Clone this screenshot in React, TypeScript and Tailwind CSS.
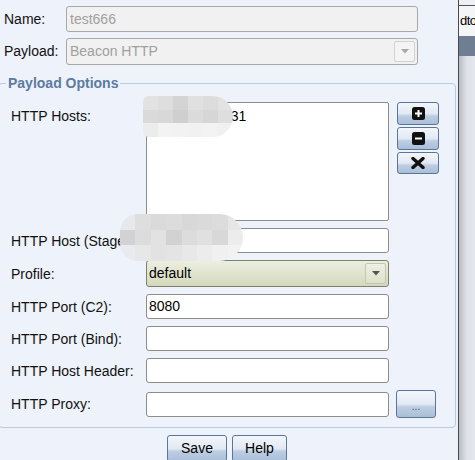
import type { ReactNode } from 'react'

const font = "font-['Liberation_Sans',Arial,sans-serif]"

const btnBg =
  'bg-[linear-gradient(to_bottom,#f3f6fb_0%,#e2e9f3_50%,#bccde2_62%,#aabfd8_100%)]'

function Arrow({ color }: { color: string }) {
  return (
    <svg width="8" height="5" viewBox="0 0 8 5">
      <path d="M0 0 H8 L4 4.5 Z" fill={color} />
    </svg>
  )
}

function TextBox({ value, className = '' }: { value?: string; className?: string }) {
  return (
    <div
      className={`w-[243px] h-[25px] border border-[#8c8c8c] rounded-[3px] bg-white flex items-center pl-[2px] text-[14px] text-black ${className}`}
    >
      {value}
    </div>
  )
}

function Row({ label, children, h = 'h-[25px]' }: { label: string; children: ReactNode; h?: string }) {
  return (
    <div className={`flex items-center ${h}`}>
      <div className="w-[135px] shrink-0 text-[14px] leading-[16px] text-[#111] whitespace-nowrap">{label}</div>
      {children}
    </div>
  )
}

function SideButton({ children, h = 'h-[23px]' }: { children: ReactNode; h?: string }) {
  return (
    <div
      className={`w-[42px] ${h} border border-[#5a7598] rounded-[3px] ${btnBg} flex items-center justify-center`}
    >
      {children}
    </div>
  )
}

function Mosaic({ cells, className }: { cells: string[][]; className: string }) {
  return (
    <div className={`absolute overflow-hidden flex flex-col ${className}`}>
      {cells.map((row, i) => (
        <div key={i} className="flex flex-1">
          {row.map((c, j) => (
            <div key={j} className="flex-1" style={{ background: c }} />
          ))}
        </div>
      ))}
    </div>
  )
}

export default function App() {
  return (
    <div className={`relative w-[475px] h-[460px] overflow-hidden flex bg-[#eef2fa] ${font}`}>
      {/* dialog */}
      <div className="w-[458px] shrink-0 flex flex-col pt-[6px]">
        <div className="flex items-center h-[26px]">
          <div className="w-[66px] pl-[4px] text-[14px] text-[#111]">Name:</div>
          <div className="w-[352px] h-[26px] border border-[#a8a8a8] rounded-[3px] bg-[#f1f1f1] flex items-center pl-[3px] text-[14px] text-[#a0a0a0]">
            test666
          </div>
        </div>
        <div className="flex items-center h-[27px] mt-[6px]">
          <div className="w-[66px] pl-[4px] text-[14px] text-[#111]">Payload:</div>
          <div className="w-[352px] h-[27px] border border-[#a8a8a8] rounded-[3px] bg-[#f1f1f1] flex items-center justify-between pl-[3px] pr-[2px] text-[14px] text-[#a0a0a0]">
            <span>Beacon HTTP</span>
            <div className="w-[21px] h-[21px] border border-[#d2d2d2] rounded-[2px] bg-[#f4f4f4] flex items-center justify-center">
              <Arrow color="#a8a8a8" />
            </div>
          </div>
        </div>

        <fieldset className="mt-[10px] ml-[-2px] w-[458px] border border-[#bccbdd] rounded-[4px] pt-[11px] pb-[9px] pl-[12px]">
          <legend className="ml-[-5px] px-[2px] text-[14px] leading-[16px] font-bold text-[#5b7ba2]">
            Payload Options
          </legend>

          <div className="flex items-start">
            <div className="w-[135px] shrink-0 pt-[6px] text-[14px] leading-[16px] text-[#111]">HTTP Hosts:</div>
            <div className="w-[243px] h-[119px] border border-[#8c8c8c] rounded-[2px] bg-white pt-[5px] pl-[2px] text-[14px] leading-[16px] text-black">
              192.168.10.131
            </div>
            <div className="ml-[8px] flex flex-col gap-[2px]">
              <SideButton>
                <svg width="13" height="13" viewBox="0 0 13 13">
                  <rect width="13" height="13" rx="2.5" fill="#111" />
                  <rect x="3" y="5.5" width="7" height="2" fill="#fff" />
                  <rect x="5.5" y="3" width="2" height="7" fill="#fff" />
                </svg>
              </SideButton>
              <SideButton>
                <svg width="13" height="13" viewBox="0 0 13 13">
                  <rect width="13" height="13" rx="2.5" fill="#111" />
                  <rect x="3" y="5.5" width="7" height="2" fill="#fff" />
                </svg>
              </SideButton>
              <SideButton h="h-[22px]">
                <svg width="14" height="12" viewBox="0 0 14 12">
                  <path d="M2 1.5 L12 10.5 M12 1.5 L2 10.5" stroke="#111" strokeWidth="3.4" strokeLinecap="round" />
                </svg>
              </SideButton>
            </div>
          </div>

          <div className="mt-[7px] flex flex-col gap-[7px]">
            <Row label="HTTP Host (Stager):">
              <TextBox />
            </Row>
            <Row label="Profile:" h="h-[27px]">
              <div className="w-[243px] h-[27px] border border-[#7d816b] rounded-[3px] bg-[linear-gradient(to_bottom,#eceee0,#d4d9bd)] flex items-center justify-between pl-[2px] pr-[2px] text-[14px] text-black">
                <span>default</span>
                <div className="w-[21px] h-[21px] border border-[#c4c8b0] rounded-[2px] bg-[linear-gradient(to_bottom,#eef0e4,#dde1c9)] flex items-center justify-center">
                  <Arrow color="#555" />
                </div>
              </div>
            </Row>
            <Row label="HTTP Port (C2):">
              <TextBox value="8080" />
            </Row>
            <Row label="HTTP Port (Bind):">
              <TextBox />
            </Row>
            <Row label="HTTP Host Header:">
              <TextBox />
            </Row>
            <Row label="HTTP Proxy:" h="h-[28px]">
              <TextBox />
              <div className={`ml-[7px] w-[40px] h-[28px] border border-[#5a7598] rounded-[3px] ${btnBg} flex items-end justify-center pb-[5px] text-[10px] leading-[10px] text-[#34506f]`}>
                ...
              </div>
            </Row>
          </div>
        </fieldset>

        <div className="mt-[7px] flex justify-center gap-[5px] pr-[4px]">
          <div className={`w-[60px] h-[27px] border border-[#5a7598] rounded-[3px] ${btnBg} flex items-center justify-center text-[14px] text-black`}>
            Save
          </div>
          <div className={`w-[55px] h-[27px] border border-[#5a7598] rounded-[3px] ${btnBg} flex items-center justify-center text-[14px] text-black`}>
            Help
          </div>
        </div>
      </div>

      {/* window behind */}
      <div className="w-[17px] shrink-0 flex flex-col border-l border-[#4a4a4a] overflow-hidden">
        <div className="h-[6px] bg-[#eceff4] border-b border-[#555]" />
        <div className="h-[30px] bg-[#f4f5f7] flex items-center pl-[1px] text-[13px] tracking-[-0.5px] text-black whitespace-nowrap">dto</div>
        <div className="h-[20px] bg-[#6f7e92]" />
        <div className="flex-1 bg-[linear-gradient(to_right,#b9bcc2,#dfe2e8_50%,#e4e7ed)]" />
      </div>

      {/* redaction mosaics */}
      <Mosaic
        className="left-[143px] top-[96px] w-[90px] h-[41px] rounded-l-[6px] rounded-r-[22px]"
        cells={[
          ['#e2e2e2', '#dedede', '#d4d4d4', '#e0e0e0', '#dcdcdc', '#e2e2e2'],
          ['#dadada', '#d8d8d8', '#cfcfcf', '#dbdbdb', '#d6d6d6', '#dedede'],
          ['#ececec', '#f3f3f3', '#f2f2f2', '#f1f1f1', '#f3f3f3', '#f0f0f0'],
        ]}
      />
      <Mosaic
        className="left-[120px] top-[214px] w-[123px] h-[47px] rounded-l-[18px] rounded-r-[24px]"
        cells={[
          ['#e6e8ec', '#dedede', '#dadada', '#dcdcdc', '#d8d8d8', '#dadada', '#dcdcdc', '#e6e6e6'],
          ['#d2d2d4', '#dcdcdc', '#e2e2e2', '#d2d2d2', '#dcdcdc', '#e0e0e0', '#d8d8d8', '#ececec'],
          ['#e8eaee', '#e6e7e9', '#e2e2e2', '#e4e4e4', '#e8e8e8', '#ececec', '#f0f0f0', '#f2f2f2'],
        ]}
      />
    </div>
  )
}
